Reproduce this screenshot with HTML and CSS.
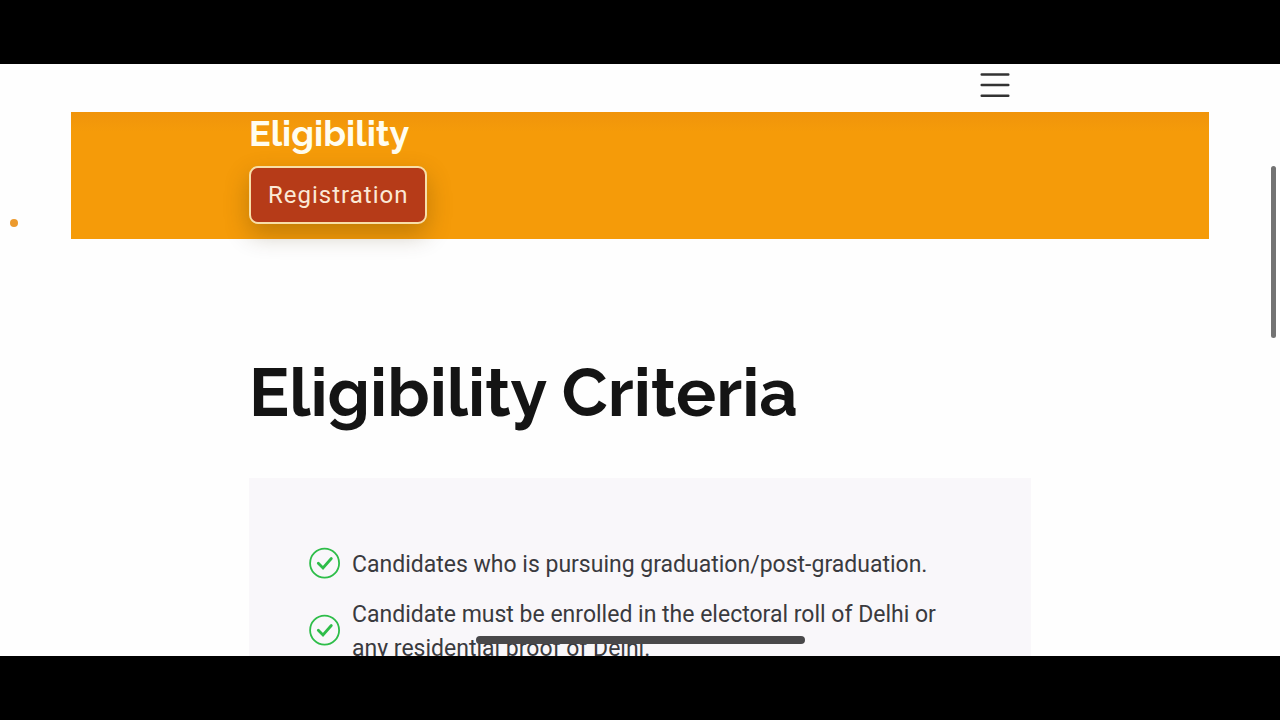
FILE: index.html
```html
<!DOCTYPE html>
<html lang="en">
<head>
  <meta charset="utf-8">
  <meta name="viewport" content="width=device-width, initial-scale=1">
  <title>Eligibility</title>
  <link rel="stylesheet" href="styles.css">
</head>
<body>
  <div class="screen">
    <div class="page">
      <header class="topbar container">
        <button class="menu" type="button" aria-label="Menu">
          <svg width="30" height="26" viewBox="0 0 30 26" fill="none" stroke="#333" stroke-width="2.5" stroke-linecap="round" aria-hidden="true">
            <path d="M1.7 2.5H28.3M1.7 13H28.3M1.7 23.7H28.3"/>
          </svg>
        </button>
      </header>
      <section class="banner">
        <div class="container banner-content">
          <h2 class="banner-title">Eligibility</h2>
          <a class="register" href="#">Registration</a>
        </div>
      </section>
      <main class="container">
        <h1 class="heading">Eligibility Criteria</h1>
        <ul class="criteria">
          <li class="criterion">
            <svg class="tick" viewBox="0 0 32 32" fill="none" stroke="#2ebd49" aria-hidden="true">
              <circle cx="15.6" cy="14.2" r="14.5" stroke-width="1.8"/>
              <path d="M9.3 14.2L14 18.9L22.3 9.5" stroke-width="2.8" stroke-linecap="round"/>
            </svg>
            <span>Candidates who is pursuing graduation/post-graduation.</span>
          </li>
          <li class="criterion">
            <svg class="tick" viewBox="0 0 32 32" fill="none" stroke="#2ebd49" aria-hidden="true">
              <circle cx="15.6" cy="14.2" r="14.5" stroke-width="1.8"/>
              <path d="M9.3 14.2L14 18.9L22.3 9.5" stroke-width="2.8" stroke-linecap="round"/>
            </svg>
            <span>Candidate must be enrolled in the electoral roll of Delhi or any residential proof of Delhi.</span>
          </li>
        </ul>
      </main>
    </div>
    <span class="dot"></span>
    <span class="scroll-thumb"></span>
    <span class="home-indicator"></span>
  </div>
</body>
</html>
```
FILE: styles.css
```css
* {
  box-sizing: border-box;
}

body {
  margin: 0;
  height: 100vh;
  padding: 64px 0;
  background: #000;
  color: #3a3a3e;
  font-family: Roboto, "Liberation Sans", sans-serif;
}

.screen {
  position: relative;
  height: 100%;
  overflow: hidden;
  background: #fefefe;
}

.page {
  padding: 0 71px;
}

.container {
  max-width: 782px;
  margin: 0 auto;
}

.topbar {
  display: flex;
  align-items: flex-start;
  justify-content: flex-end;
  height: 48px;
  padding: 8px 21px;
}

.menu {
  padding: 0;
  border: 0;
  background: none;
  line-height: 0;
}

.menu svg {
  display: block;
}

.banner {
  background: linear-gradient(#f0940b, #f59b09 20px);
}

.banner-content {
  display: flex;
  flex-direction: column;
  align-items: flex-start;
  gap: 12px;
  padding-bottom: 15px;
}

.banner-title {
  margin: 0;
  color: #fffdf0;
  font: 700 36px/42px Raleway, Lato, sans-serif;
}

.register {
  padding: 12px 17px;
  border: 2px solid #f8dfa8;
  border-radius: 9px;
  background: #b63b18;
  box-shadow: 0 10px 24px rgba(70, 50, 0, 0.3);
  color: #fbe9d6;
  font-size: 24px;
  line-height: 30px;
  letter-spacing: 1px;
  text-decoration: none;
}

.heading {
  margin: 113px 0 44px;
  color: #141414;
  font: 700 67px/82px Raleway, Lato, sans-serif;
}

.criteria {
  display: flex;
  flex-direction: column;
  gap: 16px;
  margin: 0;
  padding: 70px 60px;
  background: #f9f7fa;
  list-style: none;
  font-size: 23px;
  line-height: 34px;
}

.criterion {
  display: flex;
  align-items: center;
  gap: 11px;
}

.tick {
  flex: none;
  width: 32px;
  height: 32px;
  overflow: visible;
}

.dot {
  position: absolute;
  top: 155px;
  left: 10px;
  width: 8px;
  height: 8px;
  border-radius: 50%;
  background: #ec9a2e;
}

.scroll-thumb {
  position: absolute;
  top: 102px;
  right: 4px;
  width: 5px;
  height: 172px;
  border-radius: 3px;
  background: #737373;
}

.home-indicator {
  position: absolute;
  bottom: 12px;
  left: 50%;
  width: 329px;
  height: 8px;
  margin-left: -164px;
  border-radius: 4px;
  background: #49484a;
}
```
